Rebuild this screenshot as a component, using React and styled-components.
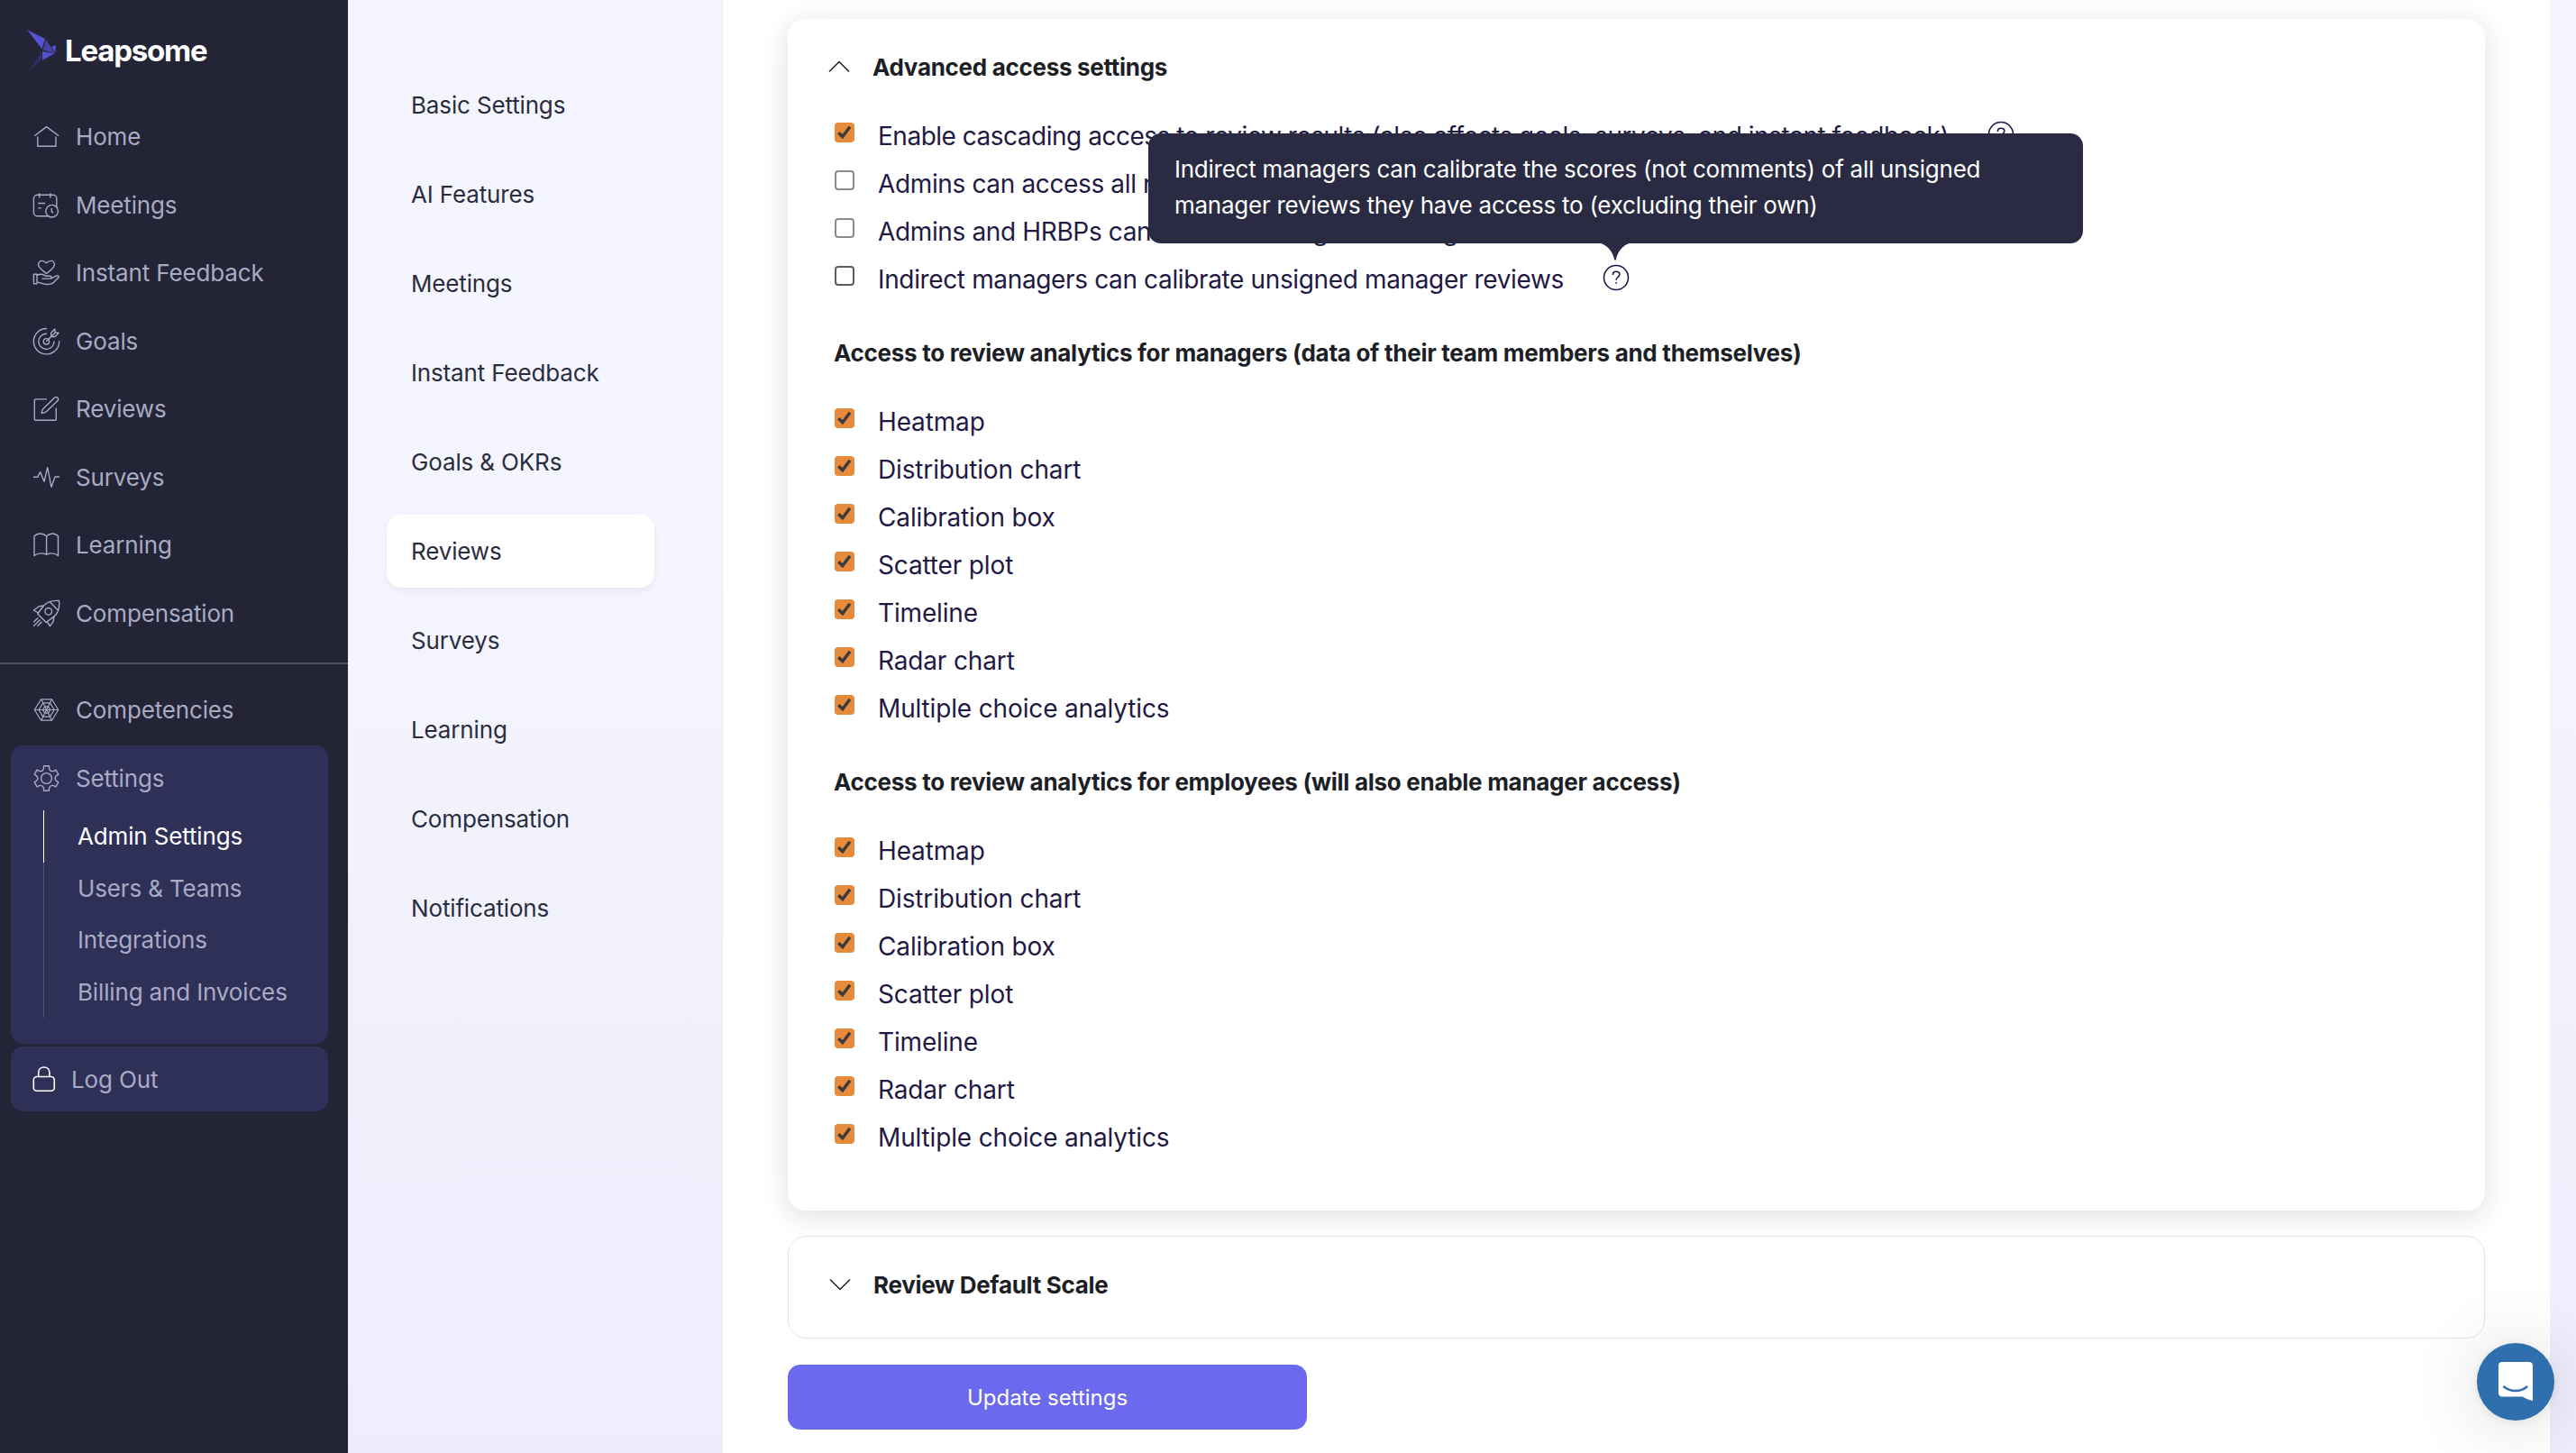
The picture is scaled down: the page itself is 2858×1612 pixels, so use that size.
import React from 'react'
import styled, { createGlobalStyle, css } from 'styled-components'

const GlobalStyle = createGlobalStyle`
    * {
        box-sizing: border-box;
    }

    body {
        margin: 0;
        background: #fff;
        font-family: Inter, "Liberation Sans", sans-serif;
        -webkit-font-smoothing: antialiased;
    }
`

const Page = styled.div`
    display: flex;
    width: 100vw;
    height: 100vh;
    overflow: hidden;
    background: linear-gradient(180deg, #f5f5ff 0%, #f5f5ff 35%, #ededfc 100%);
`

/* ---------- left sidebar ---------- */

const Sidebar = styled.aside`
    width: 386px;
    flex: none;
    background: #232435;
    color: #a9aac4;
    font-size: 26px;
    letter-spacing: -0.15px;
`

const Brand = styled.div`
    height: 114px;
    padding: 32px 0 0 30px;
    display: flex;
    align-items: flex-start;
    gap: 8px;
`

const BrandName = styled.span`
    color: #fff;
    font-size: 33px;
    font-weight: 700;
    line-height: 49px;
    letter-spacing: -1.2px;
`

const NavItem = styled.a`
    display: flex;
    align-items: center;
    gap: 17px;
    height: ${({ $height }) => $height || 75.5}px;
    padding-left: ${({ $inset }) => $inset || 36}px;
`

const Divider = styled.hr`
    height: 2px;
    margin: 17px 0 13px;
    border: none;
    background: #505463;
`

const NavGroup = styled.div`
    width: 352px;
    margin: 1.5px 0 3px 12px;
    padding-bottom: 29px;
    border-radius: 14px;
    background: #2f3058;
`

const LogOut = styled(NavItem)`
    width: 352px;
    margin-left: 12px;
    border-radius: 14px;
    background: #2f3058;
`

const SubItem = styled.a`
    display: flex;
    align-items: center;
    height: 57.6px;
    margin-left: 36px;
    padding-left: 37px;
    border-left: 1px solid ${({ $active }) => ($active ? '#fff' : '#53566a')};
    color: ${({ $active }) => ($active ? '#fff' : 'inherit')};
`

/* ---------- settings menu ---------- */

const SettingsMenu = styled.nav`
    width: 416px;
    flex: none;
    padding: 76px 0 0 43px;
    display: flex;
    flex-direction: column;
    gap: 18px;
    border-right: 1px solid #ececf5;
`

const MenuItem = styled.a`
    display: flex;
    align-items: center;
    width: 297px;
    height: 81px;
    padding-left: 27px;
    border-radius: 16px;
    color: #2a2d3e;
    font-size: 26px;
    letter-spacing: -0.15px;

    ${({ $active }) =>
      $active &&
      css`
        background: #fff;
        box-shadow: 0 3px 6px rgba(40, 40, 80, 0.06);
    `}
`

/* ---------- content ---------- */

const Content = styled.main`
    width: 2027px;
    flex: none;
    padding: 21px 72px 0;
    background: #fff;
`

const Card = styled.section`
    height: 1322px;
    border-radius: 20px;
    background: #fff;
    box-shadow: 0 6px 30px rgba(30, 30, 60, 0.14);
`

const CollapsedCard = styled.section`
    height: 114px;
    margin-top: 28px;
    border: 1px solid #e4e4e7;
    border-radius: 20px;
`

const CardHeader = styled.header`
    display: flex;
    align-items: center;
    gap: 25px;
    height: ${({ $height }) => $height}px;
    padding: 4px 0 0 45px;
    color: #1d1f27;
    font-size: 26px;
    font-weight: 700;
    letter-spacing: -0.3px;
`

const GroupTitle = styled.h3`
    display: flex;
    align-items: center;
    height: 105px;
    margin: 0;
    padding: 7px 0 0 51px;
    color: #1d1f27;
    font-size: 26px;
    font-weight: 700;
    letter-spacing: -0.29px;
`

const Option = styled.label`
    display: flex;
    align-items: center;
    height: 53px;
    padding: 2px 0 0 52px;
    color: #1f1a44;
    font-size: 28px;
    letter-spacing: ${({ $tracking }) => $tracking || -0.15}px;
    white-space: nowrap;
`

const Box = styled.span`
    display: flex;
    width: 22px;
    height: 22px;
    margin: 0 26px 7px 0;
    border: ${({ $checked }) => ($checked ? 'none' : '2px solid #8a8a8a')};
    border-color: ${({ $hovered }) => $hovered && '#5c5c5c'};
    border-radius: 4px;
    background: ${({ $checked }) => ($checked ? '#e68a3c' : '#fff')};
`

const Help = styled.span`
    position: relative;
    display: flex;
    margin: 0 0 4px 43px;
`

const Tooltip = styled.div`
    position: absolute;
    left: -504px;
    bottom: 53px;
    z-index: 2;
    width: 1037px;
    height: 122px;
    padding: 20px 29px;
    border-radius: 14px;
    background: #2a2b42;
    color: #fff;
    font-size: 26px;
    line-height: 40px;
    letter-spacing: -0.25px;
`

const TooltipArrow = styled.svg`
    position: absolute;
    left: 498px;
    top: 121px;
`

const SubmitButton = styled.button`
    display: block;
    width: 576px;
    height: 72px;
    margin-top: 29px;
    border: none;
    border-radius: 14px;
    background: #6b69ee;
    color: #fff;
    font-family: inherit;
    font-size: 24px;
    letter-spacing: 0;
`

const ChatButton = styled.button`
    position: fixed;
    right: 24px;
    bottom: 36px;
    width: 86px;
    height: 86px;
    padding: 0;
    border: none;
    border-radius: 50%;
    background: #2f6fae;
    box-shadow: 0 2px 12px rgba(0, 0, 0, 0.08), 0 4px 80px rgba(0, 0, 0, 0.16);
`

/* ---------- icons ---------- */

const Icon = ({ children, color = 'currentColor' }) => (
  <svg width="31" height="31" viewBox="0 0 31 31" fill="none" stroke={color} strokeWidth="1.4" strokeLinejoin="round">
    {children}
  </svg>
)

const HomeIcon = () => (
  <Icon>
    <path d="M2.3 14.8 15.6 4.6l13.6 10.2M5.8 15.5v10.7H26V15.5" />
  </Icon>
)

const MeetingsIcon = () => (
  <Icon>
    <rect x="1.4" y="4.2" width="25.4" height="23.6" rx="4" />
    <path d="M7.7 2.2v5.3M20 2.2v5.3M6.3 13.5h7.8M6.3 18.9h3.4" />
    <circle cx="21.6" cy="22.2" r="6.8" fill="#232435" />
    <path d="M21.3 18.9v4l1.8 1.2" />
  </Icon>
)

const FeedbackIcon = () => (
  <Icon>
    <path d="M15.5 16.5C11 13 6.5 10.3 6.5 6.6c0-2.3 1.7-4.2 4-4.2 2 0 3.6.7 5 2.3 1.4-1.6 3-2.3 5-2.3 2.3 0 4 1.9 4 4.2 0 3.7-4.5 6.4-9 9.9Z" />
    <path d="M1.4 17.2H5v10.5H1.4zM5 18.5c4-2 7-1.6 9.5.8h5c2 0 2 2.8 0 2.8H11h9.3l6-2.9c1.5-.7 3 .2 3.2 1.1l-6.2 6.1c-1 1-2 1.5-3.3 1.7-3 .5-7 .4-9.500-.7L5 25.9" />
  </Icon>
)

const GoalsIcon = () => (
  <Icon>
    <path d="M16 1.5A14.2 14.2 0 1 0 29.7 15.2M16 7.3A8.6 8.6 0 1 0 24 15.6" />
    <circle cx="15.4" cy="15.8" r="3.2" />
    <path d="M15.4 15.8 25.5 5.7M20.7 10.5V6.3L24.8 2l.4 3.9 3.9.4-4.2 4.2z" />
  </Icon>
)

const ReviewsIcon = () => (
  <Icon>
    <path d="M16 4.9H3.5c-.7 0-1.2.4-1.2 1.1v21.2c0 .7.5 1.1 1.2 1.1h21.6c.7 0 1.2-.4 1.2-1.1V14.5" />
    <path d="M10.2 20.3c.1-1.9.4-3.6 1.7-4.9L24.5 3.2c2.3-2 5.4.8 3.5 3.3L15.6 18.6c-1.4 1.3-3.4 1.7-5.4 1.7Z" />
  </Icon>
)

const SurveysIcon = () => (
  <Icon>
    <path d="M1 15.3h4.7l3-5.6L13 20.3l3.7-15.6L21 26.3 25 15h5" />
  </Icon>
)

const LearningIcon = () => (
  <Icon>
    <path d="M15.6 5.8C11.5 2.1 5.5 2.1 2 5.8v21.7c4-3 9.5-3 13.6-1.3 4.1-1.7 9.4-1.7 12.9 1.3V5.8C25 2.1 19.7 2.1 15.6 5.8v20.4" />
  </Icon>
)

const RocketIcon = () => (
  <Icon>
    <path d="M29.5 1.5C21.5.8 16 3 12 7.5L5.7 16l9.5 9.5 8.6-6.4C28.6 15 30.5 9.5 29.5 1.5ZM19.8 3.3l8 8.3" />
    <circle cx="17.8" cy="13.3" r="3.8" />
    <path d="M12.5 6.9 7.3 7.7 1.3 12l5.2 2.8M23.8 19.1l-.6 5.3-3.8 5.2-3.2-5M1.2 25.3l5-4.8M1.2 29.8l7.3-7.3M5.5 29.8l5-5" />
  </Icon>
)

const CompetenciesIcon = () => (
  <Icon>
    <path d="M9.7 3.8h11.8l7.2 11.7-7.2 11.7H9.7L2.3 15.5ZM11.7 7.9h7.8l4.7 7.6-4.7 7.6h-7.8L7 15.5ZM13.7 11.8h3.8l2.2 3.7-2.2 3.7h-3.8l-2.2-3.7Z" strokeWidth="1.2" />
    <path d="M9.7 3.8l11.8 23.4M21.5 3.8 9.7 27.2M2.3 15.5h26.4" strokeWidth="1.2" />
  </Icon>
)

// six-tooth gear around the centre of the 31px grid
const gearPath = () => {
  const at = (deg, r) => {
    const a = (deg * Math.PI) / 180
    return `${(15.5 + r * Math.cos(a)).toFixed(2)} ${(15.5 + r * Math.sin(a)).toFixed(2)}`
  }
  let d = ''
  for (let k = 0; k < 6; k++) {
    const c = k * 60 - 90
    d += `${k ? 'L' : 'M'}${at(c - 17, 10.8)}L${at(c - 12, 14)}L${at(c + 12, 14)}L${at(c + 17, 10.8)}Q${at(c + 30, 8.8)} ${at(c + 43, 10.8)}`
  }
  return d + 'Z'
}

const GearIcon = () => (
  <Icon>
    <path d={gearPath()} />
    <circle cx="15.5" cy="15.5" r="5.9" />
  </Icon>
)

const LockIcon = () => (
  <svg width="26" height="30" viewBox="0 0 26 30" fill="none" stroke="#fff" strokeWidth="1.6">
    <rect x="1.3" y="12.5" width="23" height="15.8" rx="3.5" />
    <path d="M6.7 12.5V8c0-3.5 2.6-6 6.1-6s6.1 2.5 6.1 6v4.5" />
  </svg>
)

const BirdLogo = () => (
  <svg width="34" height="48" viewBox="0 0 34 48">
    <path d="M0 1 20 11 16.5 22.5Z" fill="#5453d3" />
    <path d="M21.3 12 31 27.5 17.3 23.3Z" fill="#4443a0" />
    <path d="M17 25 30.5 27.5 17 34.8Z" fill="#5453d3" />
    <path d="M27 19.8 32 18.3 31.3 26.5Z" fill="#5453d3" />
    <path d="M16 25.5V34L2.5 46.5Z" fill="#312f66" />
  </svg>
)

const Chevron = ({ up }) => (
  <svg width="24" height="14" viewBox="0 0 24 14" fill="none" stroke="#1d1f27" strokeWidth="1.5">
    <path d={up ? 'M1 12.5 12 1.5l11 11' : 'M1 1.5 12 12.5l11-11'} />
  </svg>
)

const Check = () => (
  <svg width="22" height="22" viewBox="0 0 22 22" fill="none" stroke="#3b3b3b" strokeWidth="3.4">
    <path d="M4.3 11.3 8.8 15.6 17 4.8" />
  </svg>
)

const HelpMark = () => (
  <svg width="30" height="30" viewBox="0 0 30 30" fill="none" stroke="#1f1a44" strokeWidth="1.6">
    <circle cx="15" cy="15" r="13.5" />
    <path d="M11.3 12c.1-2.3 1.6-3.7 3.8-3.7s3.8 1.3 3.8 3.3c0 2.9-3.8 2.9-3.8 6.2" />
    <circle cx="15.1" cy="20.9" r=".7" fill="#1f1a44" strokeWidth=".6" />
  </svg>
)

const mainNav = [
  ['Home', HomeIcon],
  ['Meetings', MeetingsIcon],
  ['Instant Feedback', FeedbackIcon],
  ['Goals', GoalsIcon],
  ['Reviews', ReviewsIcon],
  ['Surveys', SurveysIcon],
  ['Learning', LearningIcon],
  ['Compensation', RocketIcon],
]

const settingsNav = ['Admin Settings', 'Users & Teams', 'Integrations', 'Billing and Invoices']

const menu = [
  'Basic Settings',
  'AI Features',
  'Meetings',
  'Instant Feedback',
  'Goals & OKRs',
  'Reviews',
  'Surveys',
  'Learning',
  'Compensation',
  'Notifications',
]

const analytics = [
  'Heatmap',
  'Distribution chart',
  'Calibration box',
  'Scatter plot',
  'Timeline',
  'Radar chart',
  'Multiple choice analytics',
]

const CheckOption = ({ label, checked, hovered, tracking, children }) => (
  <Option $tracking={tracking}>
    <Box $checked={checked} $hovered={hovered}>
      {checked && <Check />}
    </Box>
    {label}
    {children}
  </Option>
)

const App = () => {
  return (
    <>
      <GlobalStyle />
      <Page>
        <Sidebar>
          <Brand>
            <BirdLogo />
            <BrandName>Leapsome</BrandName>
          </Brand>
          {mainNav.map(([label, NavIcon]) => (
            <NavItem key={label}>
              <NavIcon />
              {label}
            </NavItem>
          ))}
          <Divider />
          <NavItem>
            <CompetenciesIcon />
            Competencies
          </NavItem>
          <NavGroup>
            <NavItem $height={72} $inset={24}>
              <GearIcon />
              Settings
            </NavItem>
            {settingsNav.map((label, i) => (
              <SubItem key={label} $active={i === 0}>
                {label}
              </SubItem>
            ))}
          </NavGroup>
          <LogOut $height={72} $inset={24}>
            <LockIcon />
            Log Out
          </LogOut>
        </Sidebar>

        <SettingsMenu>
          {menu.map((label) => (
            <MenuItem key={label} $active={label === 'Reviews'}>
              {label}
            </MenuItem>
          ))}
        </SettingsMenu>

        <Content>
          <Card>
            <CardHeader $height={102}>
              <Chevron up />
              Advanced access settings
            </CardHeader>
            <CheckOption
              checked
              tracking={-0.49}
              label="Enable cascading access to review results (also affects goals, surveys, and instant feedback)"
            >
              <Help>
                <HelpMark />
              </Help>
            </CheckOption>
            <CheckOption label="Admins can access all reviews" tracking={-0.36} />
            <CheckOption label="Admins and HRBPs can calibrate unsigned manager reviews" tracking={-0.36} />
            <CheckOption hovered label="Indirect managers can calibrate unsigned manager reviews" tracking={-0.36}>
              <Help>
                <HelpMark />
                <Tooltip>
                  Indirect managers can calibrate the scores (not comments) of all unsigned
                  <br />
                  manager reviews they have access to (excluding their own)
                  <TooltipArrow width="40" height="21" viewBox="0 0 40 21">
                    <path d="M0 0h40c-9 1-17 8-19.3 19.5h-1.4C17 8 9 1 0 0Z" fill="#2a2b42" />
                  </TooltipArrow>
                </Tooltip>
              </Help>
            </CheckOption>
            <GroupTitle>Access to review analytics for managers (data of their team members and themselves)</GroupTitle>
            {analytics.map((label) => (
              <CheckOption key={label} checked label={label} />
            ))}
            <GroupTitle>Access to review analytics for employees (will also enable manager access)</GroupTitle>
            {analytics.map((label) => (
              <CheckOption key={label} checked label={label} />
            ))}
          </Card>
          <CollapsedCard>
            <CardHeader $height={102}>
              <Chevron />
              Review Default Scale
            </CardHeader>
          </CollapsedCard>
          <SubmitButton>Update settings</SubmitButton>
        </Content>

        <ChatButton aria-label="Open chat">
          <svg width="86" height="86" viewBox="0 0 86 86" fill="none">
            <path d="M28 21h30c2.300 0 4 1.500 4 4V64c-4-1-8-2.500-11.500-4.500H28c-2.300 0-4-1.500-4-4V25c0-2.500 1.700-4 4-4Z" fill="#fff" />
            <path d="M30 48.500c7.500 6 18.500 6 25.500 0" stroke="#2f6fae" strokeWidth="2.400" strokeLinecap="round" />
          </svg>
        </ChatButton>
      </Page>
    </>
  )
}

export default App
